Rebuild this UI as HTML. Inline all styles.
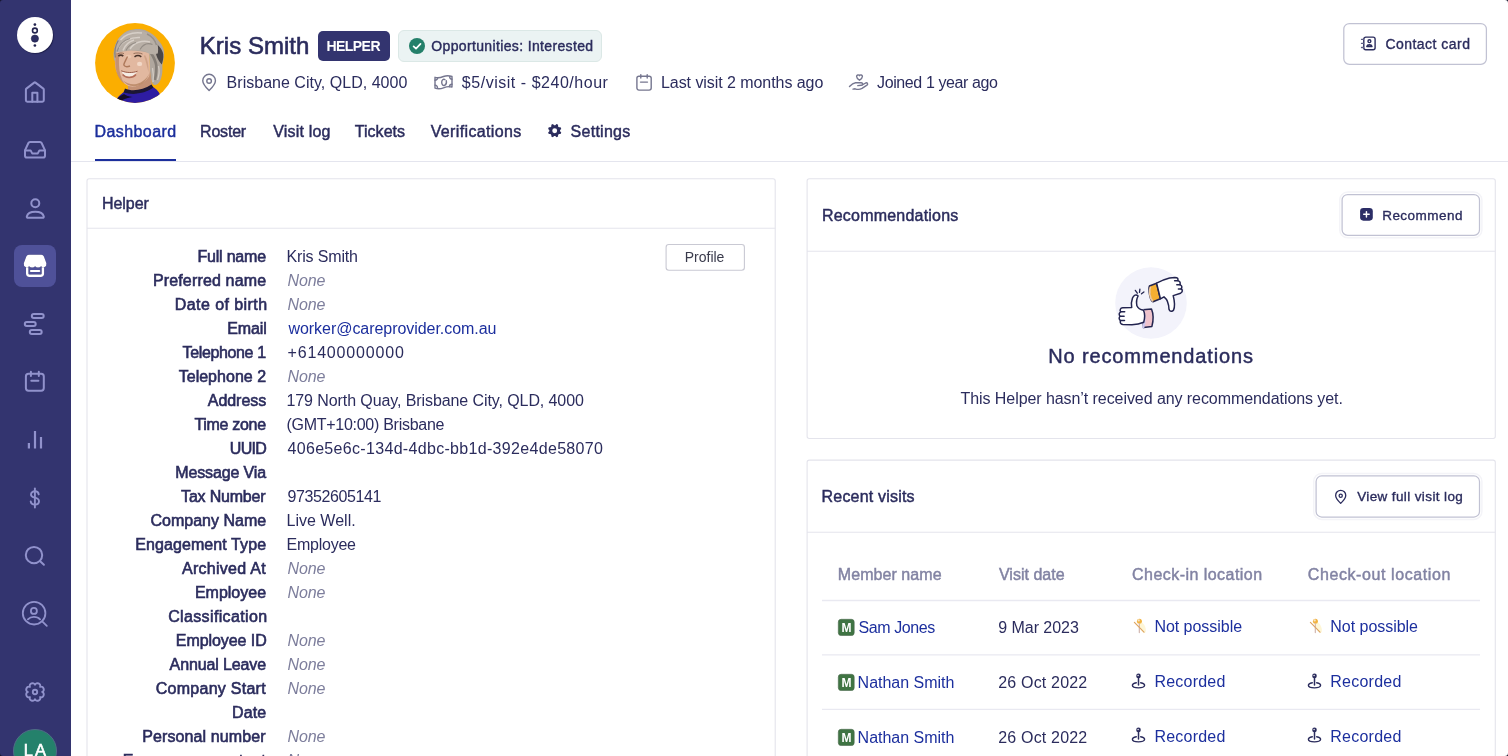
<!DOCTYPE html>
<html lang="en">
<head>
<meta charset="utf-8">
<title>Kris Smith - Helper</title>
<style>
*{box-sizing:border-box;margin:0;padding:0}
html,body{width:1508px;height:756px;overflow:hidden;background:#fff}
body{font-family:"Liberation Sans",sans-serif;color:#2b2c5d;position:relative;font-size:16px}
.a{position:absolute}
.t{position:absolute;white-space:nowrap;line-height:1}
#side{position:absolute;left:0;top:0;width:71px;height:756px;background:#33346f}
svg{position:absolute;overflow:visible}
.ic{fill:none;stroke:#9192cc;stroke-width:2;stroke-linecap:round;stroke-linejoin:round}
.hi{fill:none;stroke:#75768f;stroke-width:1.400;stroke-linecap:round;stroke-linejoin:round}
.card{position:absolute;border:1px solid #e3e4ec;border-radius:3px;background:#fff}
.hl{position:absolute;height:1px;background:#e6e7ef}
.btn{position:absolute;border:1px solid #bfc0d3;border-radius:7px;background:#fff}
#store{fill:#fff;stroke:#fff;stroke-width:0;stroke-linejoin:round;filter:drop-shadow(.8px .9px .3px rgba(20,20,60,.75))}
#store path:nth-child(n+2){fill:none}
</style>
</head>
<body>
<div id="root" style="position:absolute;left:0;top:0;width:1508px;height:756px;overflow:hidden;will-change:transform;background:rgba(255,255,255,0.999)">

<!-- ================= SIDEBAR ================= -->
<div id="side">
  <!-- logo -->
  <div class="a" style="left:17px;top:17px;width:36px;height:36px;border-radius:50%;background:#fff;box-shadow:.8px .8px 1px rgba(10,10,40,.55)"></div>
  <svg style="left:17px;top:17px" width="36" height="36" viewBox="0 0 36 36">
    <circle cx="17.900" cy="7.600" r="1.350" fill="#23244f"/>
    <circle cx="17.900" cy="13.500" r="2.400" fill="none" stroke="#23244f" stroke-width="1.600"/>
    <circle cx="17.900" cy="21.600" r="3.600" fill="#2c2d62" stroke="#1f2048" stroke-width=".6"/>
    <circle cx="17.900" cy="28.500" r="1.350" fill="#23244f"/>
  </svg>
  <!-- home -->
  <svg class="ic" style="left:23px;top:80px" width="24" height="24" viewBox="0 0 24 24">
    <path d="M2.900 20.300V9.600q0-.6.500-1L11.200 2.600q.65-.5 1.300 0L20.300 8.600q.5.400.5 1V20.300q0 1.400-1.400 1.400H4.300q-1.400 0-1.400-1.400Z"/>
    <path d="M9.300 21.700V12.800h5.100V21.700"/>
  </svg>
  <!-- inbox / tray -->
  <svg class="ic" style="left:23px;top:138px" width="24" height="24" viewBox="0 0 24 24">
    <path d="M2 12.400 5.400 5q.5-1 1.600-1h10q1.100 0 1.600 1L22 12.400v5.400q0 1.800-1.800 1.800H3.800q-1.800 0-1.800-1.800Z"/>
    <path d="M2 12.400h5.600l1.600 3h5.600l1.600-3H22"/>
  </svg>
  <!-- user -->
  <svg class="ic" style="left:23px;top:196px" width="24" height="24" viewBox="0 0 24 24">
    <circle cx="12.300" cy="7.300" r="4"/>
    <path d="M3.800 20.400C4.600 17.200 7.900 15.800 12.300 15.800S20 17.200 20.800 20.400C21 21.400 20.400 21.800 19.600 21.800H5C4.200 21.800 3.600 21.400 3.800 20.400Z"/>
  </svg>
  <!-- active tile -->
  <div class="a" style="left:14px;top:245.200px;width:42.200px;height:42px;border-radius:8px;background:#4f5199"></div>
  <svg style="left:23px;top:254px" width="25" height="25" viewBox="0 0 25 25">
    <g id="store">
    <path d="M5.800 .7H18.400Q20.200.7 20.900 2.400L23.400 9.200Q23.800 12 21.600 12.900 19.600 13.600 18.100 12.300 16.800 13.600 15 13.600 13.300 13.600 12.100 12.300 10.900 13.600 9.200 13.600 7.400 13.600 6.100 12.300 4.600 13.600 2.600 12.900.4 12 .8 9.200L3.300 2.400Q4 .7 5.800.7Z"/>
    <path d="M4.200 13.200V19.600Q4.200 21.800 6.400 21.800H17.700Q19.900 21.800 19.900 19.600V13.200" fill="none" stroke-width="2.400"/>
    <path d="M7.900 17H16.300" fill="none" stroke-width="2.100" stroke-linecap="round"/>
    </g>
  </svg>
  <!-- timeline -->
  <svg class="ic" style="left:23px;top:312px" width="24" height="24" viewBox="0 0 24 24">
    <rect x="8.800" y="2" width="11.900" height="4" rx="2"/>
    <rect x="1.800" y="10" width="10.900" height="4" rx="2"/>
    <rect x="6.800" y="18" width="11.900" height="4" rx="2"/>
  </svg>
  <!-- calendar -->
  <svg class="ic" style="left:23px;top:370px" width="24" height="24" viewBox="0 0 24 24">
    <rect x="2.900" y="3.800" width="17.900" height="16.900" rx="2.600"/>
    <path d="M7.900 1.800v4.200M15.800 1.800v4.200M8.300 10.800h7.100"/>
  </svg>
  <!-- bars -->
  <svg class="ic" style="left:23px;top:428px;stroke-linecap:butt;stroke-width:2.200" width="24" height="24" viewBox="0 0 24 24">
    <path d="M5.900 14.900v5.700M12 3v17.600M18 9.100v11.500"/>
  </svg>
  <!-- dollar -->
  <svg class="ic" style="left:23px;top:486px;stroke-width:1.900" width="24" height="24" viewBox="0 0 24 24">
    <path d="M11.900 2.400v19.200"/>
    <path d="M15.700 8.400C15.500 6.300 14 5.300 11.900 5.300c-2.300 0-3.900 1.200-3.900 3.100 0 2.200 1.900 2.800 3.900 3.300s4.100 1.300 4.100 3.600c0 2.100-1.800 3.300-4.100 3.300-2.400 0-4-1.100-4.200-3.200"/>
  </svg>
  <!-- search -->
  <svg class="ic" style="left:23px;top:544px" width="24" height="24" viewBox="0 0 24 24">
    <circle cx="11" cy="11.100" r="8.200"/><path d="M16.900 17l4 3.800"/>
  </svg>
  <!-- user search -->
  <svg class="ic" style="left:20px;top:599px;stroke-width:1.800" width="30" height="30" viewBox="0 0 30 30">
    <circle cx="14.100" cy="14.200" r="11.300"/><path d="M22.200 22.300l4.600 4.600"/>
    <circle cx="13.900" cy="11.900" r="3"/>
    <path d="M7.900 20.400c1.600-1.800 3.600-2.500 6-2.500s4.600.7 6.200 2.500"/>
  </svg>
  <!-- gear -->
  <svg class="ic" style="left:23px;top:680px;stroke-width:1.900" width="24" height="24" viewBox="0 0 24 24">
    <circle cx="12" cy="12" r="2.200"/>
    <path d="M19.20 12.00C22.45 13.15 20.20 18.57 17.09 17.09C18.57 20.20 13.15 22.45 12.00 19.20C10.85 22.45 5.43 20.20 6.91 17.09C3.80 18.57 1.55 13.15 4.80 12.00C1.55 10.85 3.80 5.43 6.91 6.91C5.43 3.80 10.85 1.55 12.00 4.80C13.15 1.55 18.57 3.80 17.09 6.91C20.20 5.43 22.45 10.85 19.20 12.00Z"/>
  </svg>
  <!-- avatar LA -->
  <div class="a" style="left:13px;top:729px;width:44px;height:44px;border-radius:50%;background:#24816b;border:1px solid #4f6d86"></div>
</div>

<!-- ================= BORDERS (antialiased at fractional coords) ================= -->
<svg style="left:0;top:0" width="1508" height="756" viewBox="0 0 1508 756" fill="none" stroke="#e4e4ec" stroke-width="1.100">
  <rect x="87" y="178.800" width="688.200" height="620" rx="2.200"/>
  <path d="M87 228.300H775.200"/>
  <rect x="807.100" y="178.800" width="688.200" height="259.700" rx="2.200"/>
  <path d="M807.100 251.300H1495.300"/>
  <rect x="807.100" y="460.100" width="688.200" height="340" rx="2.200"/>
  <path d="M807.100 532.300H1495.300"/>
  <path d="M0 0H3Q0 0 0 3ZM1508 0V3Q1508 0 1505 0ZM0 756V753Q0 756 3 756ZM1508 756H1505Q1508 756 1508 753Z" fill="#16162e" stroke="none"/>
  <g stroke="#f4f4f8" stroke-width="1.500"><rect x="1339.700" y="192.100" width="142.200" height="45.700" rx="8"/><rect x="1313.700" y="473.500" width="168.200" height="45.900" rx="8"/></g>
  <g stroke="#c1c2d3" stroke-width="1.250" fill="#fff">
    <rect x="1343.800" y="23.500" width="142.600" height="40.900" rx="5.600"/>
    <rect x="1342.100" y="194.500" width="137.400" height="40.900" rx="5.600"/>
    <rect x="1316.100" y="475.950" width="163.400" height="41.050" rx="5.600"/>
    <rect x="666.100" y="244.500" width="78.300" height="25.800" rx="2.700" stroke="#c9c9d3" stroke-width="1.100"/>
  </g>
  <g stroke="#e9e9f1"><path d="M822 600.500H1480M822 654.800H1480M822 709.300H1480" stroke-width="1.300"/></g>
</svg>
<!-- ================= HEADER ================= -->
<!-- avatar -->
<svg style="left:95.300px;top:23.300px" width="80" height="80" viewBox="0 0 80 80">
  <defs>
    <clipPath id="avc"><circle cx="40" cy="40" r="39.900"/></clipPath>
    <filter id="bl" x="-10%" y="-10%" width="120%" height="120%"><feGaussianBlur stdDeviation="0.650"/></filter>
  </defs>
  <g clip-path="url(#avc)">
    <rect width="80" height="80" fill="#fbae00"/>
    <g filter="url(#bl)">
      <!-- hair silhouette -->
      <path d="M19.600 38.500C17.800 33 18.600 27 20.300 22.900 21.600 18 23.600 15 26.600 12.300 30 8.600 34 6.700 38.300 6.500 43 5.600 48 6.200 52 8 56.500 10 60.400 13 62.600 16.500 66 20 68.400 24 69 28.200 69.600 33 68.400 37.500 67.400 41.900 67.400 45.500 67.600 49 66.800 52.500 66 56.500 64.800 59.500 62.600 61 60.800 62.400 58.800 62.400 57.800 61 56.200 58 55.600 55 55.200 51.400L54 30 21.300 29.200Z" fill="#b0a79e"/>
      <!-- dark band on right -->
      <path d="M59.500 19.500C63.500 22 67.500 26.500 68.200 31 68.800 35 67.600 38.500 66.800 41.500 64.800 39.500 62.800 36.500 61.600 33 60.400 29 59.600 24 59.500 19.500Z" fill="#4b4646"/>
      <path d="M56 30C58.500 34 60.500 38 61.200 42 61.800 47 61 52 59.800 57" stroke="#857e77" stroke-width="2.600" fill="none"/>
      <path d="M63.500 43C64.500 47 64.300 52 62.500 57M57.500 45C58.500 50 58.500 55 58 59" stroke="#d2cbc3" stroke-width="1.300" fill="none"/>
      <!-- neck -->
      <path d="M33 57L55 47 57 62.500C50 68.500 42 71 33 68.500Z" fill="#c39174"/>
      <!-- body -->
      <path d="M18 82C21.500 74.500 26.500 70.500 30.900 67.500 38 71.500 49 69 56.300 63.100 60.500 65 63.500 68 65.500 72.500L60 86 22 86Z" fill="#2d1fa2"/>
      <path d="M30 65.500C37.500 69 48 67 56.500 61.500L58.500 64.600C50 70.500 39 72.500 28.500 69.500Z" fill="#1b1434"/>
      <path d="M17 82C21 76 25.500 72.500 29 71 31 72.500 34 73.500 37.500 74 30 75 24.500 78 20 84Z" fill="#130f2c"/>
      <!-- face -->
      <path d="M21.300 29.200C19.800 34 19.600 39 20.300 44 21.500 51 26 58.500 31.500 62 35 64 39 64.300 43 62.500 47.500 60.500 51.500 57.500 54.100 53.500 55 50 55 46 54.800 42L54 30C45 27 30 26.500 21.300 29.200Z" fill="#e2b8a0"/>
      <path d="M21 30C19.800 36 19.900 44 21.800 50 23.300 54.500 26 58.500 29.500 61 26 55.500 24.200 49 24 42 23.900 37 24 33 24.800 30Z" fill="#bd8a6a" opacity=".8"/>
      <path d="M28 57.500C32 63 40 65.500 47.500 60.500 50.500 58 53 54.500 54.300 50.500 52 55.500 47.500 59.500 41.500 61 36.500 62 31.500 60.500 28 57.500Z" fill="#b98765" opacity=".85"/>
      <path d="M50 32C52.500 36 53.800 42 53.500 49 52 44 51 38 49 33Z" fill="#c79a7e" opacity=".7"/>
      <ellipse cx="44.600" cy="40.900" rx="2.600" ry="2.200" fill="#f4dccb" opacity=".9"/>
      <ellipse cx="33.500" cy="33.500" rx="3" ry="1.800" fill="#edcbb3" opacity=".8"/>
      <!-- nose -->
      <path d="M32.500 33.500C31 37 28.800 40 28.800 42 29.800 43.800 32.500 44 35 43" stroke="#ae785a" stroke-width="1.400" fill="none"/>
      <!-- eyes / brows -->
      <path d="M23.300 33.200C24.800 32 27 32 28.300 33.200" stroke="#47332b" stroke-width="1.600" fill="none"/>
      <path d="M39.500 33.800C41.500 32.400 44.500 32.400 46.300 33.800" stroke="#47332b" stroke-width="1.600" fill="none"/>
      <path d="M22.800 30.600C24.800 29.800 27.200 29.800 29 30.600M38.500 30.600C41.500 29.600 45 29.800 47.500 31" stroke="#8d6853" stroke-width=".9" fill="none"/>
      <!-- mouth -->
      <path d="M26.600 48.200C31.500 50 37 50.400 42 48.600 40 52.600 36.500 54 32.800 53.500 29.600 53 27.600 51 26.600 48.200Z" fill="#f5ece4"/>
      <path d="M26.200 47.800C31.500 49.800 37 50.200 42.500 48.200" stroke="#93523f" stroke-width=".9" fill="none"/>
      <path d="M27.600 51.500C30.500 55.200 37.500 55.600 41 51.500" stroke="#b36c58" stroke-width="1.500" fill="none"/>
      <!-- fringe -->
      <path d="M19.400 36C18 28 19.600 21 23.600 15.500 28 10 35 7 42 7.200 49 7 56 10.500 60 16 62.800 20 63.800 25 62.800 30.500 59.500 31.500 56 31.500 53.100 30.300 50 28 46 27 41.400 27.100 37 26.500 33 27.500 30.900 28.200 27 28.500 24 29 21.300 29.200 20.500 31.500 20 34 19.400 36Z" fill="#b8afa6"/>
      <path d="M25.500 17C30 11.500 38 9 47 10M23.500 25C27 18 36 14 45 14.500M35 26C39 19.500 47 17 55 19M28 27.500C30 22 34 18.500 39 17" stroke="#d8d1c9" stroke-width="1.600" fill="none" opacity=".95"/>
      <path d="M22 28.500C24 22 29 17 35 15.500M45 26.500C48 21.500 52.500 19.500 57.500 21.500M31 27.500C33 23 36.500 20.500 41 19.500" stroke="#8d867f" stroke-width="1.200" fill="none" opacity=".85"/>
      <path d="M20.300 34.500C19.300 28.500 20.300 22.500 23.300 17.500" stroke="#756e68" stroke-width="1.300" fill="none" opacity=".7"/>
      <path d="M52 11C56.500 13 60 17 61.500 22" stroke="#8f8881" stroke-width="1.500" fill="none" opacity=".8"/>
    </g>
  </g>
</svg>

<!-- HELPER badge -->
<div class="a" style="left:318px;top:31px;width:71.500px;height:29.600px;border-radius:5px;background:#33346f"></div>
<!-- Opportunities badge -->
<div class="a" style="left:397.500px;top:30.300px;width:204px;height:31.300px;border-radius:6px;background:#ebf3f3;border:1px solid #dbe8e6"></div>
<svg style="left:408.600px;top:38.200px" width="16" height="16" viewBox="0 0 16 16">
  <circle cx="8" cy="8" r="8" fill="#24806a"/>
  <path d="M4.600 8.300l2.400 2.300 4.500-4.700" fill="none" stroke="#fff" stroke-width="1.700" stroke-linecap="round" stroke-linejoin="round"/>
</svg>

<!-- location pin -->
<svg class="hi" style="left:201px;top:72.500px" width="16" height="19" viewBox="0 0 16 19">
  <path d="M8.100 17.600C4 13.400 1.750 10.600 1.750 7.650a6.350 6.350 0 0 1 12.700 0c0 2.950-2.250 5.750-6.350 9.950Z"/>
  <circle cx="8.100" cy="8" r="2.300"/>
</svg>
<!-- money -->
<svg class="hi" style="left:434px;top:74.500px" width="19" height="15" viewBox="0 0 19 15">
  <path d="M1 2.300C4 3.300 6.700 2.600 9.500 1.500S15.200.500 18 1.500V12.100C15.200 11.100 12.300 11.700 9.500 12.800S4 14.100 1 13.100Z"/>
  <path d="M10.900 4.600C9.400 3.700 7.700 5 7.700 7.300S9.200 10.900 10.600 10.300 12.700 7.600 12.300 5.800"/>
  <path d="M1 5.200C2.500 5.100 3.500 4.300 3.700 2.900M18 4.300C16.600 4.200 15.700 3.200 15.600 1.800M1 10.100C2.500 10.200 3.400 11.200 3.500 12.800M18 9.300C16.500 9.400 15.500 10.300 15.400 11.700"/>
</svg>
<!-- calendar small -->
<svg class="hi" style="left:635.500px;top:74px" width="16" height="17" viewBox="0 0 16 17">
  <rect x=".900" y="2.200" width="14.300" height="13.900" rx="2.100"/>
  <path d="M4.800.600v3.400M11.200.600v3.400M4.500 8.100h7"/>
</svg>
<!-- hand heart -->
<svg class="hi" style="left:849px;top:74px" width="20" height="17" viewBox="0 0 20 17">
  <path d="M10.500 6.200C8.700 4.900 7.600 3.800 7.600 2.500a1.550 1.550 0 0 1 2.900-.8 1.550 1.550 0 0 1 2.900.8c0 1.300-1.100 2.400-2.900 3.700Z"/>
  <path d="M.5 12.500C2.400 10.500 4.500 9 6.500 8.800L12.300 8.700C14 8.800 14 11 12.400 11.200L8.800 11.600"/>
  <path d="M13.700 10.700 16.700 9C18.300 8.300 19.300 10.100 18 11.100L13 14.400C11 15.600 8.600 15.700 6.100 14.800L4 15.100"/>
</svg>
<!-- Contact card button -->
<svg style="left:1361px;top:36.400px" width="15" height="15" viewBox="0 0 15 15" fill="none" stroke="#2b2c5d" stroke-width="1.400" stroke-linecap="round" stroke-linejoin="round">
  <rect x="2.800" y="1.100" width="11.300" height="12.700" rx="2"/>
  <circle cx="8.400" cy="5.200" r="1.450"/>
  <path d="M5.800 10.500C6.100 9.200 7 8.800 8.400 8.800S10.700 9.200 11 10.500Z"/>
  <path d="M.5 3.400h2M.5 7.400h2M.5 11.500h2" stroke="#5e5f86" stroke-width="1.300"/>
</svg>

<!-- tab underline + header rule -->
<div class="a" style="left:95px;top:158.800px;width:80.700px;height:2.300px;background:#1c2f9c"></div>
<div class="hl" style="left:71px;top:161.200px;width:1437px;height:1.300px;background:#e4e5ee"></div>
<!-- settings gear -->
<svg style="left:547.500px;top:124.100px" width="13.400" height="13.400" viewBox="0 0 24 24">
  <path d="M13.13 2.37L15.17 0.22L18.09 1.43L18.01 4.39L19.61 5.99L22.57 5.91L23.78 8.83L21.63 10.87L21.63 13.13L23.78 15.17L22.57 18.09L19.61 18.01L18.01 19.61L18.09 22.57L15.17 23.78L13.13 21.63L10.87 21.63L8.83 23.78L5.91 22.57L5.99 19.61L4.39 18.01L1.43 18.09L0.22 15.17L2.37 13.13L2.37 10.87L0.22 8.83L1.43 5.91L4.39 5.99L5.99 4.39L5.91 1.43L8.83 0.22L10.87 2.37Z M12 7.6a4.4 4.4 0 1 0 0 8.8a4.4 4.4 0 1 0 0-8.800Z" fill="#2b2c5d" fill-rule="evenodd"/>
</svg>

<!-- ================= LEFT CARD ================= -->

<!-- ================= RIGHT CARDS ================= -->
<svg style="left:1360px;top:208.400px" width="12.900" height="12.700" viewBox="0 0 13 13">
  <rect width="13" height="13" rx="3.400" fill="#2b2d66"/>
  <path d="M6.500 3.700v5.600M3.700 6.500h5.600" stroke="#fff" stroke-width="1.500" stroke-linecap="round"/>
</svg>
<!-- thumbs illustration -->
<svg style="left:1115px;top:267px" width="72" height="72" viewBox="0 0 72 72">
  <circle cx="36" cy="36" r="35.800" fill="#f3f3fb"/>
  <g fill="#fff" stroke="#23244f" stroke-width="1.500" stroke-linecap="round" stroke-linejoin="round">
    <!-- thumbs down (top right) -->
    <path d="M34.400 19l7.200-2.800 3.800 15.600-7.400 3c-1.400-.4-2.600-2.600-3.400-7-.8-4.600-.8-7.600-.2-8.800Z" fill="#f4ae32"/>
    <path d="M35.300 20.500c-1.400 3.200-.6 10.600 2.200 13.400" fill="none" stroke="#ecc9a0" stroke-width="1.800"/>
    <path d="M41.600 16.200c4.400-2.400 8.800-4.200 13-5.200l5.400-.6c2.600 0 3.400 1.400 2.800 3.200 2.200.6 3 2 2 4 2 .8 2.600 2.400 1.400 4.200 1.600 1.200 1.600 3.200-.6 4.400l-7.400 2.400c1.400 5.600 1.800 11 .4 14.400-1.400 2-4 1.600-4.600-.6-.2-6-1.600-10-5-12.600l-3.600 2Z"/>
    <path d="M59.600 13.800h3.400M61.800 17.800h3.400M63.400 22h3.200" fill="none"/>
    <!-- thumbs up (bottom left) -->
    <g transform="translate(1.300 2.600)">
    <path d="M26.600 40.200l8.600-.800c1.800 4.400 2 11.400.4 17.400l-8.400 1.200Z" fill="#efc3cc"/>
    <path d="M26.900 40.800c1.600 4.600 1.600 11.800.2 16.800" fill="none" stroke="#cdc8f0" stroke-width="2.200"/>
    <path d="M27.200 40.600c-2.800-.4-5.400-1.600-6.600-4.400-.6-3-.4-7 1.200-9.800-2-2.200-4.400-.8-5.600 2-1.200 3.400-1.400 6.800-.8 9.600l-9 .2c-2.400.2-3.200 2.200-2 4-1.800 1-2 3.200-.6 4.400-1.400 1.400-1.200 3.400.4 4.400-.8 2 .2 3.600 2.400 4l9 .2c4.200-.2 8.200-1 11.800-2.600 1.400-5 1.400-8.400-.2-12Z"/>
    <path d="M4.400 42.200h4M3.800 46.600h4M4.200 51h4" fill="none"/>
    <path d="M21 23.600l-2-2.800M23.200 22.800l.4-3.200M25.200 24.200l2.400-1.800" fill="none" stroke-width="1.300"/>
    </g>
  </g>
</svg>

<svg style="left:1334px;top:488.500px" width="14" height="16" viewBox="0 0 14 16" fill="none" stroke="#2b2c5d" stroke-width="1.300" stroke-linecap="round" stroke-linejoin="round">
  <path d="M6.700 14.400C3.400 11 1.650 8.800 1.650 6.400a5.050 5.050 0 0 1 10.100 0c0 2.400-1.750 4.600-5.050 8Z"/>
  <circle cx="6.700" cy="6.800" r="1.600"/>
</svg>
<!-- table rules -->
<svg style="left:838px;top:619.15px" width="16.5" height="16.8" viewBox="0 0 16.5 16.8"><rect x=".3" y=".3" width="15.900" height="16.200" rx="2.800" fill="#3f7443" stroke="#49684c" stroke-width=".6"/></svg>
<span class="t" style="left:841.5px;top:622px;font-size:12px;font-weight:bold;color:#fff;letter-spacing:-.2px">M</span>
<svg style="left:838px;top:673.80px" width="16.5" height="16.8" viewBox="0 0 16.5 16.8"><rect x=".3" y=".3" width="15.900" height="16.200" rx="2.800" fill="#3f7443" stroke="#49684c" stroke-width=".6"/></svg>
<span class="t" style="left:841.5px;top:677px;font-size:12px;font-weight:bold;color:#fff;letter-spacing:-.2px">M</span>
<svg style="left:838px;top:728.90px" width="16.5" height="16.8" viewBox="0 0 16.5 16.8"><rect x=".3" y=".3" width="15.900" height="16.200" rx="2.800" fill="#3f7443" stroke="#49684c" stroke-width=".6"/></svg>
<span class="t" style="left:841.5px;top:732px;font-size:12px;font-weight:bold;color:#fff;letter-spacing:-.2px">M</span>
<svg style="left:1133.0px;top:618.3px" width="14" height="17" viewBox="0 0 14 17" fill="none" stroke-linecap="round"><ellipse cx="9.800" cy="9.600" rx="2.500" ry="5.600" transform="rotate(-22 9.8 9.6)" fill="#fdf2c4" opacity=".7"/><circle cx="6.400" cy="3.200" r="2.500" fill="#f2b340"/><circle cx="5.700" cy="2.400" r="1.150" fill="#f6e3c6"/><path d="M6.300 5.800V14.600" stroke="#cdb0a8" stroke-width="1.100"/><path d="M1.400 4.300L11 14.200" stroke="#dda462" stroke-width="1.150"/></svg>
<svg style="left:1308.8px;top:618.3px" width="14" height="17" viewBox="0 0 14 17" fill="none" stroke-linecap="round"><ellipse cx="9.800" cy="9.600" rx="2.500" ry="5.600" transform="rotate(-22 9.8 9.6)" fill="#fdf2c4" opacity=".7"/><circle cx="6.400" cy="3.200" r="2.500" fill="#f2b340"/><circle cx="5.700" cy="2.400" r="1.150" fill="#f6e3c6"/><path d="M6.300 5.800V14.600" stroke="#cdb0a8" stroke-width="1.100"/><path d="M1.400 4.300L11 14.200" stroke="#dda462" stroke-width="1.150"/></svg>
<svg style="left:1132.4px;top:672.8px" width="13" height="16" viewBox="0 0 13 16" fill="none" stroke="#2b2c5d" stroke-width="1.400" stroke-linecap="round"><circle cx="6.500" cy="2.900" r="2.300" fill="#2b2c5d" stroke="none"/><circle cx="6.100" cy="2.500" r=".700" fill="#fff" stroke="none"/><path d="M6.500 5v7.100" stroke-width="1.500"/><path d="M4.300 9.800C1.900 10.300.400 11.200.400 12.300c0 1.500 2.700 2.600 6.100 2.600s6.100-1.100 6.100-2.600c0-1.100-1.500-2-3.900-2.500"/></svg>
<svg style="left:1308.4px;top:672.8px" width="13" height="16" viewBox="0 0 13 16" fill="none" stroke="#2b2c5d" stroke-width="1.400" stroke-linecap="round"><circle cx="6.500" cy="2.900" r="2.300" fill="#2b2c5d" stroke="none"/><circle cx="6.100" cy="2.500" r=".700" fill="#fff" stroke="none"/><path d="M6.500 5v7.100" stroke-width="1.500"/><path d="M4.300 9.800C1.900 10.300.400 11.200.400 12.300c0 1.500 2.700 2.600 6.100 2.600s6.100-1.100 6.100-2.600c0-1.100-1.500-2-3.900-2.500"/></svg>
<svg style="left:1132.4px;top:727.4px" width="13" height="16" viewBox="0 0 13 16" fill="none" stroke="#2b2c5d" stroke-width="1.400" stroke-linecap="round"><circle cx="6.500" cy="2.900" r="2.300" fill="#2b2c5d" stroke="none"/><circle cx="6.100" cy="2.500" r=".700" fill="#fff" stroke="none"/><path d="M6.500 5v7.100" stroke-width="1.500"/><path d="M4.300 9.800C1.900 10.300.400 11.200.400 12.300c0 1.500 2.700 2.600 6.100 2.600s6.100-1.100 6.100-2.600c0-1.100-1.500-2-3.900-2.500"/></svg>
<svg style="left:1308.4px;top:727.4px" width="13" height="16" viewBox="0 0 13 16" fill="none" stroke="#2b2c5d" stroke-width="1.400" stroke-linecap="round"><circle cx="6.500" cy="2.900" r="2.300" fill="#2b2c5d" stroke="none"/><circle cx="6.100" cy="2.500" r=".700" fill="#fff" stroke="none"/><path d="M6.500 5v7.100" stroke-width="1.500"/><path d="M4.300 9.800C1.900 10.300.400 11.200.400 12.300c0 1.500 2.700 2.600 6.100 2.600s6.100-1.100 6.100-2.600c0-1.100-1.500-2-3.900-2.500"/></svg>

<span class="t" style="left:199.70px;top:34px;font-size:24px;color:#2b2c5d;letter-spacing:0.043px;-webkit-text-stroke:0.6px #2b2c5d;">Kris Smith</span>
<span class="t" style="left:326.40px;top:39px;font-size:14px;color:#fff;font-weight:bold;letter-spacing:-0.537px;">HELPER</span>
<span class="t" style="left:431.30px;top:39px;font-size:14px;color:#2b2c5d;letter-spacing:0.353px;-webkit-text-stroke:0.4px #2b2c5d;">Opportunities: Interested</span>
<span class="t" style="left:226.60px;top:75px;font-size:16px;color:#2b2c5d;letter-spacing:0.020px;">Brisbane City, QLD, 4000</span>
<span class="t" style="left:461.80px;top:75px;font-size:16px;color:#2b2c5d;letter-spacing:0.529px;">$5/visit - $240/hour</span>
<span class="t" style="left:661.00px;top:75px;font-size:16px;color:#2b2c5d;letter-spacing:-0.061px;">Last visit 2 months ago</span>
<span class="t" style="left:877.10px;top:75px;font-size:16px;color:#2b2c5d;letter-spacing:-0.394px;">Joined 1 year ago</span>
<span class="t" style="left:1385.38px;top:37px;font-size:14px;color:#2b2c5d;letter-spacing:0.478px;-webkit-text-stroke:0.35px #2b2c5d;">Contact card</span>
<span class="t" style="left:94.52px;top:124px;font-size:16px;color:#1c2f9c;letter-spacing:0.421px;-webkit-text-stroke:0.45px #1c2f9c;">Dashboard</span>
<span class="t" style="left:200.03px;top:124px;font-size:16px;color:#2b2c5d;letter-spacing:-0.189px;-webkit-text-stroke:0.45px #2b2c5d;">Roster</span>
<span class="t" style="left:273.23px;top:124px;font-size:16px;color:#2b2c5d;letter-spacing:0.177px;-webkit-text-stroke:0.45px #2b2c5d;">Visit log</span>
<span class="t" style="left:354.73px;top:124px;font-size:16px;color:#2b2c5d;letter-spacing:0.045px;-webkit-text-stroke:0.45px #2b2c5d;">Tickets</span>
<span class="t" style="left:430.73px;top:124px;font-size:16px;color:#2b2c5d;letter-spacing:0.349px;-webkit-text-stroke:0.45px #2b2c5d;">Verifications</span>
<span class="t" style="left:570.62px;top:124px;font-size:16px;color:#2b2c5d;letter-spacing:0.262px;-webkit-text-stroke:0.45px #2b2c5d;">Settings</span>
<span class="t" style="left:102.02px;top:196px;font-size:16px;color:#2b2c5d;letter-spacing:-0.073px;-webkit-text-stroke:0.45px #2b2c5d;">Helper</span>
<span class="t" style="left:684.80px;top:250px;font-size:14px;color:#3a3b4c;letter-spacing:-0.017px;">Profile</span>
<span class="t" style="left:197.40px;top:249px;font-size:16px;color:#2b2c5d;letter-spacing:-0.194px;-webkit-text-stroke:0.6px #2b2c5d;">Full name</span>
<span class="t" style="left:286.50px;top:249px;font-size:16px;color:#2b2c5d;letter-spacing:-0.156px;">Kris Smith</span>
<span class="t" style="left:152.90px;top:273px;font-size:16px;color:#2b2c5d;letter-spacing:0.156px;-webkit-text-stroke:0.6px #2b2c5d;">Preferred name</span>
<span class="t" style="left:287.50px;top:273px;font-size:16px;color:#7d7e9c;font-style:italic;letter-spacing:-0.117px;">None</span>
<span class="t" style="left:174.80px;top:297px;font-size:16px;color:#2b2c5d;letter-spacing:0.429px;-webkit-text-stroke:0.6px #2b2c5d;">Date of birth</span>
<span class="t" style="left:287.50px;top:297px;font-size:16px;color:#7d7e9c;font-style:italic;letter-spacing:-0.117px;">None</span>
<span class="t" style="left:227.30px;top:321px;font-size:16px;color:#2b2c5d;letter-spacing:-0.140px;-webkit-text-stroke:0.6px #2b2c5d;">Email</span>
<span class="t" style="left:288.50px;top:321px;font-size:16px;color:#1c2f9e;letter-spacing:-0.053px;">worker@careprovider.com.au</span>
<span class="t" style="left:182.50px;top:345px;font-size:16px;color:#2b2c5d;letter-spacing:-0.359px;-webkit-text-stroke:0.6px #2b2c5d;">Telephone 1</span>
<span class="t" style="left:287.50px;top:345px;font-size:16px;color:#2b2c5d;letter-spacing:0.833px;">+61400000000</span>
<span class="t" style="left:178.70px;top:369px;font-size:16px;color:#2b2c5d;letter-spacing:0.021px;-webkit-text-stroke:0.6px #2b2c5d;">Telephone 2</span>
<span class="t" style="left:287.50px;top:369px;font-size:16px;color:#7d7e9c;font-style:italic;letter-spacing:-0.117px;">None</span>
<span class="t" style="left:207.80px;top:393px;font-size:16px;color:#2b2c5d;letter-spacing:-0.051px;-webkit-text-stroke:0.6px #2b2c5d;">Address</span>
<span class="t" style="left:286.50px;top:393px;font-size:16px;color:#2b2c5d;letter-spacing:-0.090px;">179 North Quay, Brisbane City, QLD, 4000</span>
<span class="t" style="left:194.50px;top:417px;font-size:16px;color:#2b2c5d;letter-spacing:-0.314px;-webkit-text-stroke:0.6px #2b2c5d;">Time zone</span>
<span class="t" style="left:286.50px;top:417px;font-size:16px;color:#2b2c5d;letter-spacing:-0.278px;">(GMT+10:00) Brisbane</span>
<span class="t" style="left:229.80px;top:441px;font-size:16px;color:#2b2c5d;letter-spacing:-0.718px;-webkit-text-stroke:0.6px #2b2c5d;">UUID</span>
<span class="t" style="left:287.50px;top:441px;font-size:16px;color:#2b2c5d;letter-spacing:0.318px;">406e5e6c-134d-4dbc-bb1d-392e4de58070</span>
<span class="t" style="left:175.30px;top:465px;font-size:16px;color:#2b2c5d;letter-spacing:-0.140px;-webkit-text-stroke:0.6px #2b2c5d;">Message Via</span>
<span class="t" style="left:181.10px;top:489px;font-size:16px;color:#2b2c5d;letter-spacing:-0.202px;-webkit-text-stroke:0.6px #2b2c5d;">Tax Number</span>
<span class="t" style="left:287.50px;top:489px;font-size:16px;color:#2b2c5d;letter-spacing:-0.399px;">97352605141</span>
<span class="t" style="left:150.50px;top:513px;font-size:16px;color:#2b2c5d;-webkit-text-stroke:0.6px #2b2c5d;">Company Name</span>
<span class="t" style="left:286.50px;top:513px;font-size:16px;color:#2b2c5d;letter-spacing:0.009px;">Live Well.</span>
<span class="t" style="left:135.20px;top:537px;font-size:16px;color:#2b2c5d;letter-spacing:0.094px;-webkit-text-stroke:0.6px #2b2c5d;">Engagement Type</span>
<span class="t" style="left:286.50px;top:537px;font-size:16px;color:#2b2c5d;letter-spacing:-0.237px;">Employee</span>
<span class="t" style="left:182.00px;top:561px;font-size:16px;color:#2b2c5d;letter-spacing:0.271px;-webkit-text-stroke:0.6px #2b2c5d;">Archived At</span>
<span class="t" style="left:287.50px;top:561px;font-size:16px;color:#7d7e9c;font-style:italic;letter-spacing:-0.117px;">None</span>
<span class="t" style="left:194.90px;top:585px;font-size:16px;color:#2b2c5d;letter-spacing:0.006px;-webkit-text-stroke:0.6px #2b2c5d;">Employee</span>
<span class="t" style="left:287.50px;top:585px;font-size:16px;color:#7d7e9c;font-style:italic;letter-spacing:-0.117px;">None</span>
<span class="t" style="left:168.20px;top:609px;font-size:16px;color:#2b2c5d;letter-spacing:0.356px;-webkit-text-stroke:0.6px #2b2c5d;">Classification</span>
<span class="t" style="left:175.80px;top:633px;font-size:16px;color:#2b2c5d;letter-spacing:-0.064px;-webkit-text-stroke:0.6px #2b2c5d;">Employee ID</span>
<span class="t" style="left:287.50px;top:633px;font-size:16px;color:#7d7e9c;font-style:italic;letter-spacing:-0.117px;">None</span>
<span class="t" style="left:169.60px;top:657px;font-size:16px;color:#2b2c5d;letter-spacing:-0.124px;-webkit-text-stroke:0.6px #2b2c5d;">Annual Leave</span>
<span class="t" style="left:287.50px;top:657px;font-size:16px;color:#7d7e9c;font-style:italic;letter-spacing:-0.117px;">None</span>
<span class="t" style="left:155.80px;top:681px;font-size:16px;color:#2b2c5d;letter-spacing:0.261px;-webkit-text-stroke:0.6px #2b2c5d;">Company Start</span>
<span class="t" style="left:287.50px;top:681px;font-size:16px;color:#7d7e9c;font-style:italic;letter-spacing:-0.117px;">None</span>
<span class="t" style="left:232.10px;top:705px;font-size:16px;color:#2b2c5d;letter-spacing:0.067px;-webkit-text-stroke:0.6px #2b2c5d;">Date</span>
<span class="t" style="left:142.30px;top:729px;font-size:16px;color:#2b2c5d;letter-spacing:0.099px;-webkit-text-stroke:0.6px #2b2c5d;">Personal number</span>
<span class="t" style="left:287.50px;top:729px;font-size:16px;color:#7d7e9c;font-style:italic;letter-spacing:-0.117px;">None</span>
<span class="t" style="left:122.80px;top:753px;font-size:16px;color:#2b2c5d;letter-spacing:0.368px;-webkit-text-stroke:0.6px #2b2c5d;">Emergency contact</span>
<span class="t" style="left:287.50px;top:753px;font-size:16px;color:#7d7e9c;font-style:italic;letter-spacing:-0.117px;">None</span>
<span class="t" style="left:822.02px;top:208px;font-size:16px;color:#2b2c5d;letter-spacing:0.203px;-webkit-text-stroke:0.45px #2b2c5d;">Recommendations</span>
<span class="t" style="left:1382.17px;top:209px;font-size:13.5px;color:#2b2c5d;letter-spacing:0.478px;-webkit-text-stroke:0.35px #2b2c5d;">Recommend</span>
<span class="t" style="left:1048.22px;top:346px;font-size:20px;color:#2b2c5d;letter-spacing:0.868px;-webkit-text-stroke:0.45px #2b2c5d;">No recommendations</span>
<span class="t" style="left:960.50px;top:391px;font-size:16px;color:#2b2c5d;letter-spacing:-0.069px;">This Helper hasn’t received any recommendations yet.</span>
<span class="t" style="left:821.62px;top:489px;font-size:16px;color:#2b2c5d;letter-spacing:0.187px;-webkit-text-stroke:0.45px #2b2c5d;">Recent visits</span>
<span class="t" style="left:1357.17px;top:490px;font-size:13.5px;color:#2b2c5d;letter-spacing:0.381px;-webkit-text-stroke:0.35px #2b2c5d;">View full visit log</span>
<span class="t" style="left:837.83px;top:567px;font-size:16px;color:#8283a3;letter-spacing:0.059px;-webkit-text-stroke:0.45px #8283a3;">Member name</span>
<span class="t" style="left:998.93px;top:567px;font-size:16px;color:#8283a3;letter-spacing:0.013px;-webkit-text-stroke:0.45px #8283a3;">Visit date</span>
<span class="t" style="left:1132.02px;top:567px;font-size:16px;color:#8283a3;letter-spacing:0.457px;-webkit-text-stroke:0.45px #8283a3;">Check-in location</span>
<span class="t" style="left:1307.82px;top:567px;font-size:16px;color:#8283a3;letter-spacing:0.590px;-webkit-text-stroke:0.45px #8283a3;">Check-out location</span>
<span class="t" style="left:858.60px;top:620px;font-size:16px;color:#1c2f9e;letter-spacing:-0.418px;">Sam Jones</span>
<span class="t" style="left:998.30px;top:620px;font-size:16px;color:#2b2c5d;letter-spacing:-0.049px;">9 Mar 2023</span>
<span class="t" style="left:1154.40px;top:619px;font-size:16px;color:#1c2f9e;letter-spacing:-0.032px;">Not possible</span>
<span class="t" style="left:1330.30px;top:619px;font-size:16px;color:#1c2f9e;letter-spacing:-0.032px;">Not possible</span>
<span class="t" style="left:857.60px;top:675px;font-size:16px;color:#1c2f9e;letter-spacing:-0.013px;">Nathan Smith</span>
<span class="t" style="left:998.30px;top:675px;font-size:16px;color:#2b2c5d;letter-spacing:0.173px;">26 Oct 2022</span>
<span class="t" style="left:1154.40px;top:674px;font-size:16px;color:#1c2f9e;letter-spacing:0.232px;">Recorded</span>
<span class="t" style="left:1330.30px;top:674px;font-size:16px;color:#1c2f9e;letter-spacing:0.232px;">Recorded</span>
<span class="t" style="left:857.60px;top:730px;font-size:16px;color:#1c2f9e;letter-spacing:-0.013px;">Nathan Smith</span>
<span class="t" style="left:998.30px;top:730px;font-size:16px;color:#2b2c5d;letter-spacing:0.173px;">26 Oct 2022</span>
<span class="t" style="left:1154.40px;top:729px;font-size:16px;color:#1c2f9e;letter-spacing:0.232px;">Recorded</span>
<span class="t" style="left:1330.30px;top:729px;font-size:16px;color:#1c2f9e;letter-spacing:0.232px;">Recorded</span>
<span class="t" style="left:23.70px;top:742px;font-size:16.5px;color:#fff;letter-spacing:2.018px;-webkit-text-stroke:0.6px #fff;">LA</span>

</div>
</body>
</html>
